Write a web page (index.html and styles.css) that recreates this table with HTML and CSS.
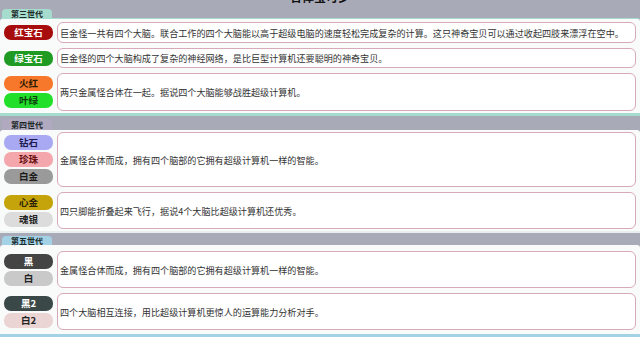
FILE: index.html
```html
<!DOCTYPE html>
<html lang="zh">
<head>
<meta charset="utf-8">
<link rel="stylesheet" href="styles.css">
</head>
<body>
<div class="page">
  <div class="title"><span>合体宝可梦</span></div>

  <section class="sec sec3">
    <div class="tabrow"><div class="tab">第三世代</div></div>
    <div class="panel">
      <div class="row">
        <div class="badges"><span class="badge b-ruby">红宝石</span></div>
        <div class="desc h21">巨金怪一共有四个大脑。联合工作的四个大脑能以高于超级电脑的速度轻松完成复杂的计算。这只神奇宝贝可以通过收起四肢来漂浮在空中。</div>
      </div>
      <div class="row">
        <div class="badges"><span class="badge b-sapph">绿宝石</span></div>
        <div class="desc h20">巨金怪的四个大脑构成了复杂的神经网络，是比巨型计算机还要聪明的神奇宝贝。</div>
      </div>
      <div class="row">
        <div class="badges"><span class="badge b-fire">火红</span><span class="badge b-leaf">叶绿</span></div>
        <div class="desc h38">两只金属怪合体在一起。据说四个大脑能够战胜超级计算机。</div>
      </div>
    </div>
  </section>

  <section class="sec sec4">
    <div class="tabrow"><div class="tab">第四世代</div></div>
    <div class="panel">
      <div class="row">
        <div class="badges"><span class="badge b-dia">钻石</span><span class="badge b-pearl">珍珠</span><span class="badge b-plat">白金</span></div>
        <div class="desc h55">金属怪合体而成，拥有四个脑部的它拥有超级计算机一样的智能。</div>
      </div>
      <div class="row">
        <div class="badges"><span class="badge b-gold">心金</span><span class="badge b-silver">魂银</span></div>
        <div class="desc h37">四只脚能折叠起来飞行，据说4个大脑比超级计算机还优秀。</div>
      </div>
    </div>
  </section>

  <section class="sec sec5">
    <div class="tabrow"><div class="tab">第五世代</div></div>
    <div class="panel">
      <div class="row">
        <div class="badges"><span class="badge b-black">黑</span><span class="badge b-white">白</span></div>
        <div class="desc h37">金属怪合体而成，拥有四个脑部的它拥有超级计算机一样的智能。</div>
      </div>
      <div class="row">
        <div class="badges"><span class="badge b-black2">黑2</span><span class="badge b-white2">白2</span></div>
        <div class="desc h37">四个大脑相互连接，用比超级计算机更惊人的运算能力分析对手。</div>
      </div>
    </div>
  </section>
</div>
</body>
</html>
```

FILE: styles.css
```css
html, body {
  margin: 0;
  padding: 0;
}
body {
  background: #a9aab8;
  font-family: "Noto Sans CJK SC", "Noto Sans", sans-serif;
  color: #222;
  width: 640px;
  height: 337px;
  overflow: hidden;
}
.page {
  display: flex;
  flex-direction: column;
}
.title {
  height: 9px;
  overflow: hidden;
  display: flex;
  justify-content: center;
}
.title span {
  font-size: 12px;
  font-weight: bold;
  line-height: 12px;
  margin-top: -9px;
  color: #111;
}
.tabrow {
  display: flex;
  align-items: flex-end;
  padding-left: 2px;
}
.tab {
  width: 50px;
  font-size: 8px;
  font-weight: bold;
  line-height: 9px;
  text-align: center;
  border-radius: 4px 4px 0 0;
  color: #1c2a2a;
}
.sec3 .tabrow { height: 9px; }
.sec3 .tab { background: #a6dccd; height: 9px; }
.sec4 .tabrow { height: 14px; }
.sec4 .tab { background: #b0a9bf; height: 11px; line-height: 11px; }
.sec5 .tabrow { height: 12px; }
.sec5 .tab { background: #a3d2e6; height: 9px; }

.panel {
  background: #f9fbfb;
  display: flex;
  flex-direction: column;
  gap: 5px;
  border-radius: 3px 3px 0 0;
}
.sec3 .panel {
  border-top: 1px solid #a6dccd;
  border-bottom: 3px solid #a6dccd;
  padding: 3px 0 2px 0;
}
.sec4 .panel {
  padding: 2px 0 2px 0;
  border-bottom: 2px solid #e6eeee;
}
.sec5 .panel {
  padding: 6px 0 4px 0;
  border-bottom: 3px solid #a3d2e6;
}
.row {
  display: flex;
  align-items: center;
  gap: 4px;
  padding: 0 4px 0 4px;
}
.badges {
  width: 49px;
  display: flex;
  flex-direction: column;
  gap: 2px;
  flex: none;
}
.badge {
  height: 15px;
  border-radius: 7px;
  font-size: 9.5px;
  font-weight: bold;
  line-height: 15px;
  text-align: center;
  color: #222;
}
.desc {
  flex: 1;
  box-sizing: border-box;
  border: 1px solid #d6a9bb;
  border-radius: 6px;
  background: #fff;
  font-size: 9.1px;
  line-height: 12px;
  padding: 0 2px;
  display: flex;
  align-items: center;
  color: #333;
  white-space: nowrap;
}
.h20 { height: 20px; }
.h21 { height: 21px; }
.h37 { height: 37px; }
.h38 { height: 38px; }
.h55 { height: 55px; }

.b-ruby { background: #a80d0d; color: #fff; }
.b-sapph { background: #1f9a23; color: #fff; }
.b-fire { background: #f7782b; color: #2a1a00; }
.b-leaf { background: #22e02a; color: #0b3a0b; }
.b-dia { background: #a9a9f3; color: #1a1a50; }
.b-pearl { background: #f3a7ad; color: #6a1010; }
.b-plat { background: #9a9a9a; color: #1b1b1b; }
.b-gold { background: #c4a40a; color: #2a2200; }
.b-silver { background: #dcdcdc; color: #222; }
.b-black { background: #444444; color: #fff; }
.b-white { background: #c9c9c9; color: #222; }
.b-black2 { background: #3b4848; color: #fff; }
.b-white2 { background: #ead4d4; color: #222; }
```
